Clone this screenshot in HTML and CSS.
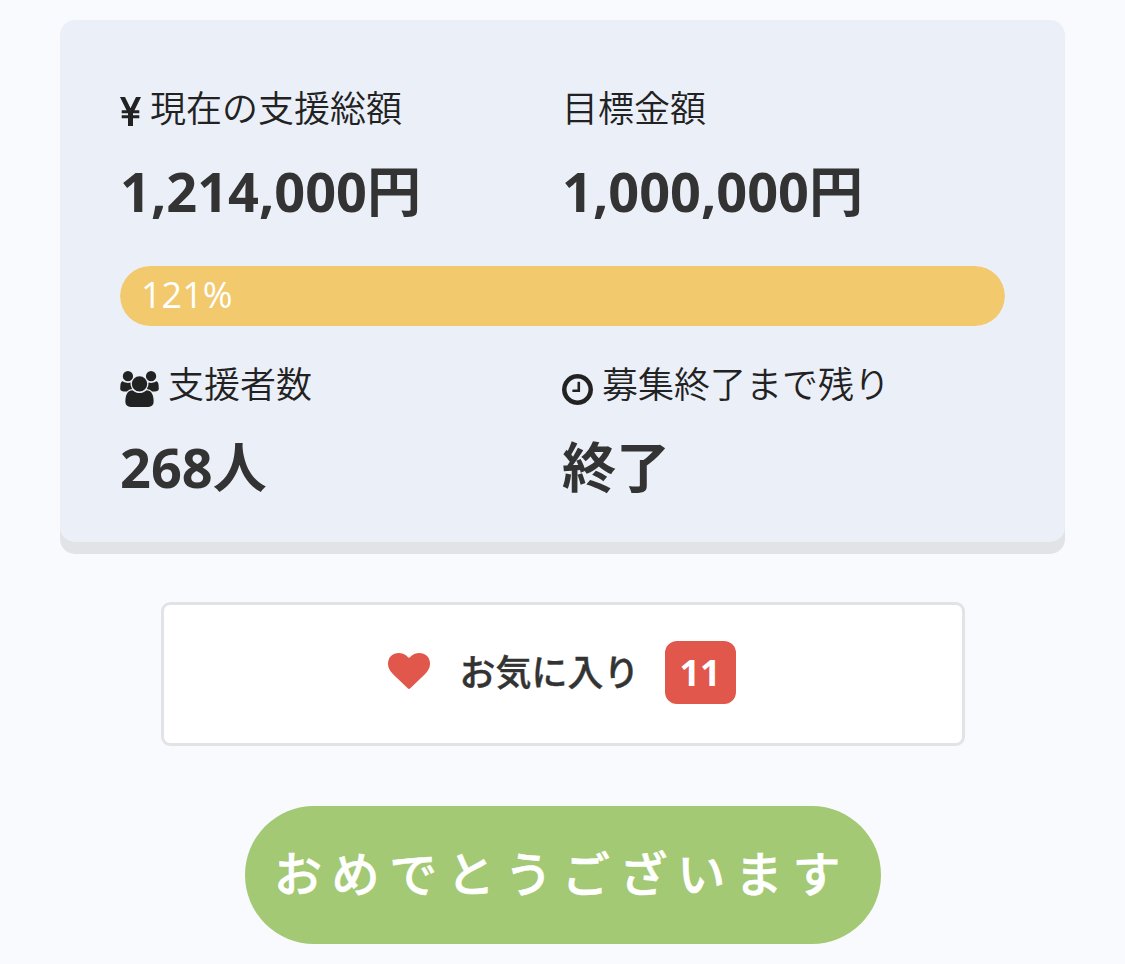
FILE: index.html
```html
<!DOCTYPE html>
<html lang="ja">
<head>
    <meta charset="UTF-8">
    <meta name="viewport" content="width=device-width, initial-scale=1.0">
    <title>プロジェクト支援状況</title>
    <link rel="stylesheet" href="styles.css">
</head>
<body>
    <div class="container">
        <div class="summary">
            <div class="stats">
                <div class="stat">
                    <div class="stat-label">
                        <svg class="icon icon-yen" viewBox="0 0 21 29"><path d="M0 0h5l5.500 11.200L16 0h5l-6.500 13.200h4.800v3h-6.300v2h6.300v3h-6.300V29H8v-7.800H1.700v-3H8v-2H1.700v-3h4.800z"/></svg>
                        <span>現在の支援総額</span>
                    </div>
                    <div class="stat-value">1,214,000円</div>
                </div>
                <div class="stat">
                    <div class="stat-label"><span>目標金額</span></div>
                    <div class="stat-value">1,000,000円</div>
                </div>
            </div>

            <div class="progress">
                <div class="progress-bar" style="width: 100%">121%</div>
            </div>

            <div class="stats">
                <div class="stat">
                    <div class="stat-label">
                        <svg class="icon icon-users" viewBox="0 0 1920 1792"><path d="M593 896q-162 5-265 128H194q-82 0-138-40.500T0 865q0-353 124-353 6 0 43.500 21t97.500 42.500T384 597q67 0 133-23-5 37-5 66 0 139 81 256zm1071 637q0 120-73 189.500t-194 69.500H523q-121 0-194-69.500T256 1533q0-53 3.500-103.500t14-109T300 1212t43-97.500 62-81 85.500-53.500T602 960q10 0 43 21.500t73 48 107 48 135 21.500 135-21.500 107-48 73-48 43-21.500q61 0 111.500 20t85.500 53.500 62 81 43 97.500 26.500 108.500 14 109 3.500 103.500zM640 256q0 106-75 181t-181 75-181-75-75-181 75-181T384 0t181 75 75 181zm704 384q0 159-112.500 271.500T960 1024 688.500 911.500 576 640t112.500-271.500T960 256t271.500 112.500T1344 640zm576 225q0 78-56 118.500t-138 40.500h-134q-103-123-265-128 81-117 81-256 0-29-5-66 66 23 133 23 59 0 119-21.500t97.500-42.500 43.500-21q124 0 124 353zm-128-609q0 106-75 181t-181 75-181-75-75-181 75-181 181-75 181 75 75 181z"/></svg>
                        <span>支援者数</span>
                    </div>
                    <div class="stat-value">268人</div>
                </div>
                <div class="stat">
                    <div class="stat-label">
                        <svg class="icon icon-clock" viewBox="128 128 1536 1536"><path d="M1024 544v448q0 14-9 23t-23 9H672q-14 0-23-9t-9-23v-64q0-14 9-23t23-9h224V544q0-14 9-23t23-9h64q14 0 23 9t9 23zm416 352q0-148-73-273t-198-198-273-73-273 73-198 198-73 273 73 273 198 198 273 73 273-73 198-198 73-273zm224 0q0 209-103 385.500T1281.500 1561 896 1664t-385.500-103T231 1281.500 128 896t103-385.500T510.500 231 896 128t385.500 103T1561 510.500 1664 896z"/></svg>
                        <span>募集終了まで残り</span>
                    </div>
                    <div class="stat-value">終了</div>
                </div>
            </div>
        </div>

        <button class="favorite">
            <svg class="icon-heart" viewBox="0 128 1792 1536"><path d="M896 1664q-26 0-44-18l-624-602q-10-8-27.500-26T145 952.500 77 855 23.500 734 0 596q0-220 127-344t351-124q62 0 126.500 21.500t120 58T820 276t76 68q36-36 76-68t95.500-68.500 120-58T1314 128q224 0 351 124t127 344q0 221-229 450l-623 600q-18 18-44 18z"/></svg>
            <span class="favorite-text">お気に入り</span>
            <span class="favorite-count">11</span>
        </button>

        <button class="btn">おめでとうございます</button>
    </div>
</body>
</html>
```
FILE: styles.css
```css
* {
    box-sizing: border-box;
}

body {
    margin: 0;
    background: #f8fafe;
    color: #222;
    font-family: 'Open Sans', 'Noto Sans CJK JP', sans-serif;
}

button {
    font-family: inherit;
    cursor: pointer;
}

.container {
    display: flex;
    flex-direction: column;
    align-items: center;
    padding: 20px 60px;
}

.summary {
    width: 100%;
    height: 522px;
    padding: 62px 60px 0;
    background: #ebeff8;
    border-radius: 15px;
    box-shadow: 0 12px 0 #e2e3e7;
}

.stats {
    display: grid;
    grid-template-columns: 442px 1fr;
}

.stat-label {
    display: flex;
    align-items: center;
    height: 54px;
    font-size: 36px;
    font-weight: 350;
    line-height: 54px;
}

.stat-value {
    height: 81px;
    margin-top: 15px;
    color: #333;
    font-size: 54px;
    font-weight: 700;
    line-height: 81px;
}

.icon {
    flex: none;
    fill: #222;
}

.icon-yen {
    width: 21px;
    height: 29px;
    margin: 5px 9px 0 0;
}

.icon-users {
    width: 39px;
    height: 36px;
    margin: 8px 9px 0 0;
}

.icon-clock {
    width: 31px;
    height: 31px;
    margin: 8px 9px 0 0;
}

.progress {
    height: 60px;
    margin: 34px 0 32px;
    border-radius: 30px;
    overflow: hidden;
}

.progress-bar {
    height: 100%;
    padding-left: 21px;
    background: #f2c96d;
    border-radius: 30px;
    color: #fff;
    font-size: 36px;
    font-weight: 400;
    line-height: 58px;
}

.favorite {
    display: flex;
    justify-content: center;
    align-items: center;
    width: 804px;
    height: 144px;
    margin-top: 60px;
    padding: 0 1px 4px 0;
    background: #fff;
    border: 3px solid #e2e3e7;
    border-radius: 9px;
    color: #333;
    font-size: 36px;
    font-weight: 700;
}

.icon-heart {
    width: 42px;
    height: 36px;
    margin: 0 29px 2px 0;
    fill: #e2574c;
}

.favorite-text {
    padding-bottom: 3px;
    font-weight: 500;
    -webkit-text-stroke: 0.4px;
}

.favorite-count {
    width: 71px;
    height: 63px;
    margin-left: 25px;
    background: #e2574c;
    border-radius: 12px;
    color: #fff;
    line-height: 63px;
    text-align: center;
}

.btn {
    width: 636px;
    height: 138px;
    margin: 60px 0 0 1px;
    padding: 0 2px 8px 0;
    background: #a3c974;
    border: none;
    border-radius: 69px;
    color: #fff;
    font-size: 48px;
    font-weight: 500;
    letter-spacing: 9.6px;
    white-space: nowrap;
    -webkit-text-stroke: 0.6px;
}
```
